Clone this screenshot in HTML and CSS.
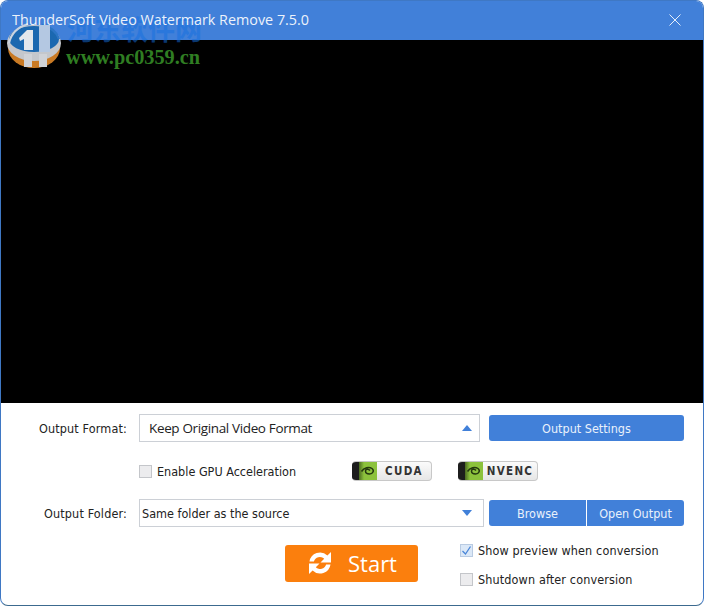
FILE: index.html
```html
<!DOCTYPE html>
<html lang="en">
<head>
<meta charset="utf-8">
<title>ThunderSoft Video Watermark Remove 7.5.0</title>
<link rel="stylesheet" href="styles.css">
</head>
<body>
<div class="window">
  <header class="titlebar">
    <span class="title">ThunderSoft Video Watermark Remove 7.5.0</span>
    <svg class="close" width="12" height="12" viewBox="0 0 12 12"><path d="M.5.5l11 11M11.500.5l-11 11" stroke="#e4eefa" stroke-width="1" fill="none"/></svg>
  </header>
  <main class="video"></main>
  <section class="panel">
    <div class="row row-format">
      <span class="label">Output Format:</span>
      <div class="select select-format">
        <span class="select-text-large">Keep Original Video Format</span>
        <span class="arrow-up"></span>
      </div>
      <button class="btn btn-settings">Output Settings</button>
    </div>
    <div class="row row-gpu">
      <span class="check"></span>
      <span class="check-label gpu-label">Enable GPU Acceleration</span>
      <span class="badge badge-cuda">
        <span class="nv"><svg width="17" height="12" viewBox="0 0 17 12"><path d="M1.500 6.500C4 2.500 9 1.500 12 3.500c2.500 2 1 5.500-2.500 5.500C7.500 9 5.500 8 5.500 6S8.500 3.500 10 5.500" fill="none" stroke="#24380f" stroke-width="1.500"/></svg></span>
        <span class="badge-text">CUDA</span>
      </span>
      <span class="badge badge-nvenc">
        <span class="nv"><svg width="17" height="12" viewBox="0 0 17 12"><path d="M1.500 6.500C4 2.500 9 1.500 12 3.500c2.500 2 1 5.500-2.500 5.500C7.500 9 5.500 8 5.500 6S8.500 3.500 10 5.500" fill="none" stroke="#24380f" stroke-width="1.500"/></svg></span>
        <span class="badge-text">NVENC</span>
      </span>
    </div>
    <div class="row row-folder">
      <span class="label">Output Folder:</span>
      <div class="select select-folder">
        <span>Same folder as the source</span>
        <span class="arrow-down"></span>
      </div>
      <div class="btn-group">
        <button class="btn btn-browse">Browse</button>
        <button class="btn btn-open">Open Output</button>
      </div>
    </div>
    <div class="row row-start">
      <button class="start">
        <svg class="sync" width="24" height="24" viewBox="0 0 24 24"><path d="M1.500 10.500A10.600 10.600 0 0 1 19.400 4.500L23 1v10.500H12.500l3.700-3.700A6.200 6.200 0 0 0 5.900 10.500zM22.500 13.500A10.600 10.600 0 0 1 4.600 19.500L1 23V12.500h10.500l-3.700 3.700A6.200 6.200 0 0 0 18.100 13.500z" fill="#fff"/></svg>
        <span>Start</span>
      </button>
      <div class="options">
        <div class="option"><span class="check check-on"><svg width="13" height="13" viewBox="0 0 13 13"><path d="M2.500 7l3 3 5-7.500" fill="none" stroke="#4a86d8" stroke-width="1.300"/></svg></span><span class="check-label">Show preview when conversion</span></div>
        <div class="option"><span class="check"></span><span class="check-label">Shutdown after conversion</span></div>
      </div>
    </div>
  </section>
  <div class="wm">
    <span class="wm-cn">河东软件网</span>
    <svg class="wm-logo" width="56" height="56" viewBox="0 0 56 56">
      <ellipse cx="28" cy="36" rx="26" ry="20" fill="#c97a24"/>
      <ellipse cx="28" cy="31" rx="27" ry="18" fill="#c4c7cc"/>
      <ellipse cx="28" cy="27" rx="25" ry="13" fill="#1b68b0"/>
      <path d="M3 31C5 22 12 15 22 12" fill="none" stroke="#c9d3e0" stroke-width="2.200"/>
      <path d="M36 13C44 15 51 20 53 27" fill="none" stroke="#2c75c4" stroke-width="2.500"/>
      <path d="M13 26l8-8h6v20h-9V27l-4 2z" fill="#e3e7ec"/>
      <rect x="33" y="13" width="11" height="27" fill="#b4c8e2"/>
      <path d="M18 42h8v13h-8zM33 42h8v13h-8z" fill="#cfd2d7"/>
    </svg>
    <span class="wm-url">www.pc0359.cn</span>
  </div>
</div>
</body>
</html>
```
FILE: styles.css
```css
* { box-sizing: border-box; }
html, body { margin: 0; padding: 0; background: #fff; }
body { width: 704px; height: 606px; overflow: hidden; font-family: "DejaVu Sans Condensed", "DejaVu Sans", sans-serif; }
.window { position: relative; width: 704px; height: 606px; display: flex; flex-direction: column; border: 1px solid #3f78c4; border-bottom-color: #3c6a8f; border-radius: 8px; overflow: hidden; background: #fff; }
.titlebar { height: 39px; flex: none; background: #4180d9; display: flex; align-items: center; justify-content: space-between; padding: 0 22px 3px 11px; }
.title { position: relative; z-index: 2; font-family: "Open Sans", sans-serif; font-size: 14.350px; color: #fff; opacity: .9; }
.close { margin-top: 2px; }
.video { height: 363px; flex: none; background: #000; }
.panel { flex: 1; display: flex; flex-direction: column; padding-top: 11px; }
.row { display: flex; align-items: center; font-size: 12.500px; color: #222; }
.row-format { height: 28px; }
.label { width: 126px; text-align: right; margin-right: 12px; letter-spacing: .15px; }
.select { height: 28px; border: 1px solid #ccd0d6; display: flex; align-items: center; justify-content: space-between; background: #fff; color: #222; }
.select-format { width: 341px; padding: 0 7px 0 9px; margin-right: 9px; }
.select-text-large { font-family: "Open Sans", sans-serif; font-size: 13.500px; letter-spacing: -.36px; }
.select-folder { width: 345px; padding: 0 11px 0 2px; margin-right: 5px; }
.arrow-up { width: 0; height: 0; border: 5.500px solid transparent; border-top: 0; border-bottom: 6px solid #4180d9; }
.arrow-down { width: 0; height: 0; border: 5.500px solid transparent; border-bottom: 0; border-top: 6px solid #4180d9; }
.btn { height: 26px; border: 0; padding: 0; background: #4180d9; color: #e9f1fb; font: inherit; }
.btn-settings { width: 195px; border-radius: 3px; }
.row-gpu { height: 24px; margin-top: 17px; padding-left: 138px; }
.check { width: 13px; height: 13px; flex: none; border: 1px solid #c4c6ca; background: #ececee; display: inline-flex; }
.check-label { margin-left: 5px; letter-spacing: .13px; }
.gpu-label { width: 195px; letter-spacing: 0; }
.badge { display: flex; width: 80px; height: 20px; border: 1px solid #c8c8c8; border-left: 0; border-radius: 4px; background: linear-gradient(#fbfbfb, #e6e6e6); overflow: hidden; }
.badge-nvenc { margin-left: 26px; }
.nv { width: 25px; flex: none; background: linear-gradient(90deg, #1d1d1d 0 7px, #4b6a22 7px, #8cc23c 12px); display: flex; align-items: center; justify-content: flex-end; }
.badge-text { flex: 1; text-align: center; font-family: "DejaVu Sans Condensed", sans-serif; font-size: 11.500px; font-weight: bold; letter-spacing: 1.300px; line-height: 18px; color: #333; }
.row-folder { height: 28px; margin-top: 16px; }
.btn-group { display: flex; width: 195px; border-radius: 3px; overflow: hidden; }
.btn-browse { width: 98px; border-right: 1px solid #fff; }
.btn-open { flex: 1; }
.row-start { align-items: flex-start; margin-top: 18px; padding-left: 284px; }
.start { width: 133px; height: 37px; border: 0; border-radius: 3px; background: #fb7f0d; color: #fff; font-family: "Open Sans", sans-serif; font-size: 22px; display: flex; align-items: center; padding: 0 0 2px 23px; gap: 16px; }
.options { margin-left: 42px; margin-top: -5px; display: flex; flex-direction: column; gap: 9px; }
.option { display: flex; align-items: center; height: 20px; }
.check-on { background: #dbe8f7; border-color: #b9cbe2; }
.check-on svg { margin: -1px; }
.wm { position: absolute; left: 5px; top: 11px; width: 200px; height: 60px; pointer-events: none; }
.wm-logo { position: absolute; left: 0; top: 0; }
.wm-cn { position: absolute; left: 61px; top: -1px; font-family: "Noto Sans CJK SC", sans-serif; font-weight: 700; font-size: 27px; line-height: 36px; color: #1470e0; opacity: .5; white-space: nowrap; }
.wm-url { position: absolute; left: 60px; top: 34px; font-family: "Liberation Serif", serif; font-weight: 700; font-size: 20.300px; color: #2f7d22; white-space: nowrap; line-height: 22px; }
```
